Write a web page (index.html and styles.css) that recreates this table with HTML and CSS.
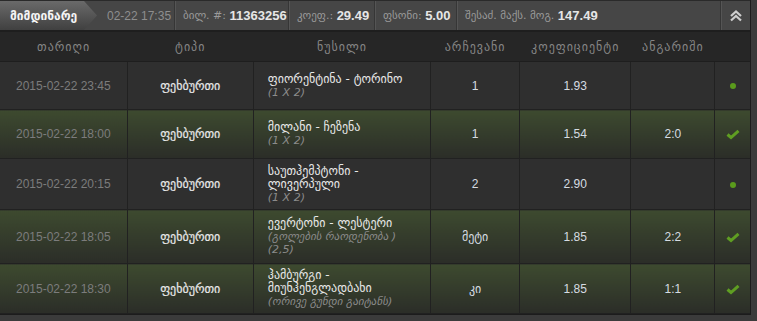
FILE: index.html
```html
<!DOCTYPE html>
<html lang="ka">
<head>
<meta charset="utf-8">
<link rel="stylesheet" href="styles.css">
</head>
<body>
<div class="panel">
  <div class="topbar">
    <div class="title">მიმდინარე</div>
    <div class="item time">02-22 17:35</div>
    <div class="item">ბილ. #: <b>11363256</b></div>
    <div class="item">კოეფ.: <b>29.49</b></div>
    <div class="item">ფსონი: <b>5.00</b></div>
    <div class="item grow">შესაძ. მაქს. მოგ. <b>147.49</b></div>
    <div class="toggle">
      <svg width="14" height="13" viewBox="0 0 14 13"><path d="M2 7 L7 2.5 L12 7 M2 11.5 L7 7 L12 11.5" fill="none" stroke="#cfcfcf" stroke-width="2.2"/></svg>
    </div>
  </div>
  <table class="bets">
    <colgroup>
      <col class="c-date"><col class="c-type"><col class="c-event"><col class="c-pick"><col class="c-odd"><col class="c-score"><col class="c-st">
    </colgroup>
    <thead>
      <tr><th>თარიღი</th><th>ტიპი</th><th>ნუსილი</th><th>არჩევანი</th><th>კოეფიციენტი</th><th>ანგარიში</th><th></th></tr>
    </thead>
    <tbody>
      <tr class="h1">
        <td class="date">2015-02-22 23:45</td><td class="type">ფეხბურთი</td>
        <td class="event"><div class="name">ფიორენტინა - ტორინო</div><div class="sub">(1 X 2)</div></td>
        <td class="num">1</td><td class="num">1.93</td><td class="num"></td>
        <td class="st"><span class="dot"></span></td>
      </tr>
      <tr class="won h2">
        <td class="date">2015-02-22 18:00</td><td class="type">ფეხბურთი</td>
        <td class="event"><div class="name">მილანი - ჩეზენა</div><div class="sub">(1 X 2)</div></td>
        <td class="num">1</td><td class="num">1.54</td><td class="num">2:0</td>
        <td class="st"><svg class="check" width="14" height="11" viewBox="0 0 14 11"><path d="M1.5 5.5 L5 8.5 L12.5 1.8" fill="none" stroke="#5f9e22" stroke-width="3"/></svg></td>
      </tr>
      <tr class="h3">
        <td class="date">2015-02-22 20:15</td><td class="type">ფეხბურთი</td>
        <td class="event"><div class="name">საუთჰემპტონი - ლივერპული</div><div class="sub">(1 X 2)</div></td>
        <td class="num">2</td><td class="num">2.90</td><td class="num"></td>
        <td class="st"><span class="dot"></span></td>
      </tr>
      <tr class="won h4">
        <td class="date">2015-02-22 18:05</td><td class="type">ფეხბურთი</td>
        <td class="event"><div class="name">ევერტონი - ლესტერი</div><div class="sub">(გოლების რაოდენობა )<br>(2,5)</div></td>
        <td class="num">მეტი</td><td class="num">1.85</td><td class="num">2:2</td>
        <td class="st"><svg class="check" width="14" height="11" viewBox="0 0 14 11"><path d="M1.5 5.5 L5 8.5 L12.5 1.8" fill="none" stroke="#5f9e22" stroke-width="3"/></svg></td>
      </tr>
      <tr class="won h5">
        <td class="date">2015-02-22 18:30</td><td class="type">ფეხბურთი</td>
        <td class="event"><div class="name">ჰამბურგი - მიუნჰენგლადბახი</div><div class="sub">(ორივე გუნდი გაიტანს)</div></td>
        <td class="num">კი</td><td class="num">1.85</td><td class="num">1:1</td>
        <td class="st"><svg class="check" width="14" height="11" viewBox="0 0 14 11"><path d="M1.5 5.5 L5 8.5 L12.5 1.8" fill="none" stroke="#5f9e22" stroke-width="3"/></svg></td>
      </tr>
    </tbody>
  </table>
</div>
</body>
</html>
```

FILE: styles.css
```css
html, body {
  margin: 0;
  padding: 0;
  background: #3b3b3b;
  font-family: "Liberation Sans", "DejaVu Sans", sans-serif;
  font-size: 12px;
}

.panel {
  width: 750px;
  border-right: 1px solid #1c1c1c;
  border-bottom: 1px solid #1c1c1c;
  background: #262626;
}

.topbar {
  display: flex;
  height: 29px;
  background: #464646;
  border-top: 1px solid #2a2a2a;
  border-bottom: 2px solid #1e1e1e;
  color: #9a9a9a;
}

.title {
  width: 97px;
  box-sizing: border-box;
  padding-left: 10px;
  display: flex;
  align-items: center;
  color: #f4f4f4;
  font-family: "DejaVu Sans", sans-serif;
  font-weight: bold;
  font-size: 12px;
  background: linear-gradient(#6a6a6a, #404040);
  clip-path: polygon(0 0, 84px 0, 97px 50%, 84px 100%, 0 100%);
}

.item {
  display: flex;
  align-items: center;
  padding: 0 8px;
  border-right: 1px solid #363636;
  box-shadow: 1px 0 0 #555;
  white-space: pre;
  font-family: "DejaVu Sans", sans-serif;
  font-size: 11px;
  color: #9a9a9a;
}

.item b {
  font-family: "Liberation Sans", sans-serif;
  font-size: 13px;
  color: #e6e6e6;
}

.item.time {
  width: 78px;
  box-sizing: border-box;
  padding-left: 10px;
  font-family: "Liberation Sans", sans-serif;
  font-size: 12px;
  color: #8e8e8e;
}

.topbar .item:nth-child(3) { width: 114px; box-sizing: border-box; }
.topbar .item:nth-child(4) { width: 86px; box-sizing: border-box; }
.topbar .item:nth-child(5) { width: 82px; box-sizing: border-box; }

.item.grow {
  flex: 1;
}

.toggle {
  width: 29px;
  display: flex;
  align-items: center;
  justify-content: center;
}

.bets {
  width: 750px;
  border-collapse: collapse;
  table-layout: fixed;
}

.c-date { width: 127px; }
.c-type { width: 126px; }
.c-event { width: 177px; }
.c-pick { width: 89px; }
.c-odd { width: 111px; }
.c-score { width: 84px; }
.c-st { width: 35px; }

.bets th {
  height: 29px;
  padding: 0;
  font-family: "DejaVu Sans", sans-serif;
  font-weight: normal;
  font-size: 12px;
  letter-spacing: 1px;
  color: #858585;
  background: #262626;
  border-bottom: 1px solid #1e1e1e;
  text-align: center;
}

.bets td {
  padding: 0;
  border: 1px solid #212121;
  background: #2f2f2f;
  text-align: center;
  vertical-align: middle;
}

.bets tr.h1 td { height: 47px; }
.bets tr.h2 td { height: 48px; }
.bets tr.h3 td { height: 50px; }
.bets tr.h4 td { height: 53px; }
.bets tr.h5 td { height: 49px; }

.bets tr.won td {
  background: linear-gradient(#3d4a2f, #2b2d28);
}

.bets tr:first-child td { border-top: none; }
.bets td:first-child { border-left: none; }
.bets td:last-child { border-right: none; }

.date {
  color: #7c7c7c;
  font-size: 12px;
}

.type {
  font-family: "DejaVu Sans", sans-serif;
  font-size: 12px;
  color: #e8e8e8;
  -webkit-text-stroke: 0.2px #e8e8e8;
}

.bets td.event {
  text-align: left;
  padding: 0 8px 0 14px;
  font-family: "DejaVu Sans", sans-serif;
  font-size: 12px;
  line-height: 13px;
  color: #e8e8e8;
}

.sub {
  font-style: italic;
  color: #8b8b8b;
  font-size: 11px;
}

.num {
  font-family: "Liberation Sans", "DejaVu Sans", sans-serif;
  font-size: 12px;
  color: #d6dce2;
}

.dot {
  display: inline-block;
  width: 6px;
  height: 6px;
  border-radius: 50%;
  background: #5a9a1c;
  vertical-align: middle;
}

.check {
  vertical-align: middle;
}
```
